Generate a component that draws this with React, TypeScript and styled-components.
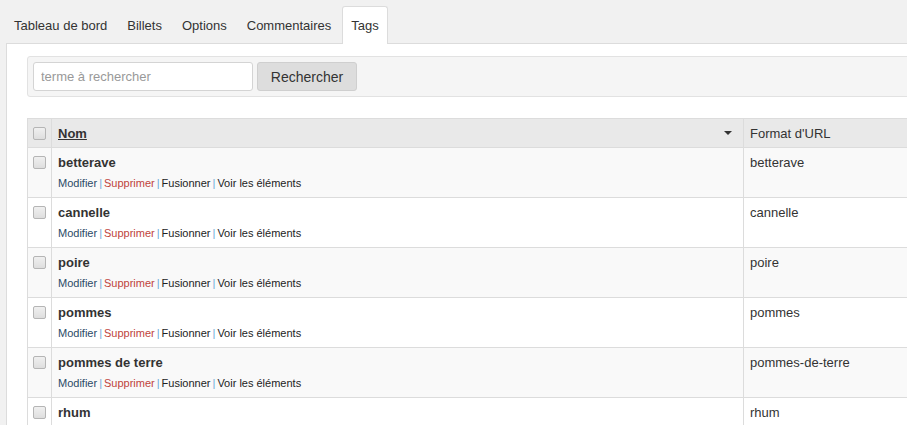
import React from "react";
import styled, { createGlobalStyle } from "styled-components";

const Global = createGlobalStyle`
  html, body { margin: 0; padding: 0; overflow: hidden; }
  body {
    background: #f1f1f1;
    font-family: "Liberation Sans", Arial, sans-serif;
    color: #333;
  }
`;

const Page = styled.div`
  width: 1100px;
`;

const TabBar = styled.nav`
  display: flex;
  align-items: flex-end;
  gap: 2px;
  padding: 6px 0 0 5px;
  height: 37px;
  position: relative;
  z-index: 1;
`;

const Tab = styled.div<{ $active?: boolean }>`
  height: 36px;
  display: flex;
  align-items: center;
  padding: 0 8px;
  font-size: 13px;
  color: #333;
  border: 1px solid ${(p) => (p.$active ? "#dcdcdc" : "transparent")};
  border-bottom: none;
  border-radius: 3px 3px 0 0;
  background: ${(p) => (p.$active ? "#fff" : "transparent")};
  margin-bottom: ${(p) => (p.$active ? "-1px" : "0")};
  padding-bottom: ${(p) => (p.$active ? "1px" : "0")};
  cursor: pointer;
`;

const Panel = styled.section`
  margin-left: 6px;
  background: #fff;
  border-top: 1px solid #dcdcdc;
  border-left: 1px solid #dcdcdc;
  padding: 12px 0 40px 20px;
  min-height: 400px;
`;

const SearchBox = styled.form`
  display: flex;
  gap: 4px;
  padding: 5px;
  background: #f5f5f5;
  border: 1px solid #e2e2e2;
  border-radius: 3px;
`;

const SearchInput = styled.input`
  box-sizing: border-box;
  width: 220px;
  height: 29px;
  border: 1px solid #d4d4d4;
  border-radius: 3px;
  background: #fff;
  padding: 0 7px;
  font-family: inherit;
  font-size: 13px;
  color: #333;
  &::placeholder { color: #999; }
`;

const Button = styled.button`
  box-sizing: border-box;
  width: 100px;
  height: 29px;
  border: 1px solid #cfcfcf;
  border-radius: 3px;
  background: #dddddd;
  font-family: inherit;
  font-size: 14px;
  color: #333;
`;

const Table = styled.table`
  margin-top: 21px;
  width: 1080px;
  border-collapse: collapse;
  border: 1px solid #dcdcdc;
  font-size: 13px;
`;

const HeadCell = styled.th<{ $w?: number }>`
  height: 28px;
  padding: 0 6px;
  background: #e9e9e9;
  border: 1px solid #dcdcdc;
  text-align: left;
  font-weight: normal;
  color: #333;
  ${(p) => (p.$w ? `width: ${p.$w}px;` : "")}
`;

const CheckHead = styled(HeadCell)`
  width: 23px;
  padding: 0;
  text-align: center;
`;

const HeadInner = styled.div`
  display: flex;
  align-items: center;
  justify-content: space-between;
  padding-right: 5px;
`;

const SortLink = styled.a`
  font-weight: bold;
  color: #333;
  text-decoration: underline;
`;

const SortArrow = styled.span`
  width: 0;
  height: 0;
  border-left: 4px solid transparent;
  border-right: 4px solid transparent;
  border-top: 4px solid #333;
`;

const Row = styled.tr<{ $odd: boolean }>`
  background: ${(p) => (p.$odd ? "#f9f9f9" : "#fff")};
`;

const Cell = styled.td`
  height: 50px;
  box-sizing: border-box;
  padding: 7px 6px 0 6px;
  vertical-align: top;
  border: 1px solid #dcdcdc;
  color: #333;
`;

const CheckCell = styled(Cell)`
  padding: 8px 0 0 0;
  text-align: center;
`;

const Check = styled.input.attrs({ type: "checkbox" })`
  appearance: none;
  box-sizing: border-box;
  width: 13px;
  height: 13px;
  margin: 0;
  display: block;
  margin-left: 5px;
  border: 1px solid #b5b5b5;
  border-radius: 2px;
  background: linear-gradient(#f0f0f0, #dedede);
`;

const HeadCheck = styled(Check)`
  margin-top: 1px;
`;

const Name = styled.div`
  font-weight: bold;
  line-height: 16px;
  color: #333;
`;

const Actions = styled.div`
  margin-top: 5px;
  font-size: 11px;
  line-height: 14px;
  color: #222;
`;

const Action = styled.a<{ $tone: "edit" | "delete" | "plain" }>`
  color: ${(p) =>
    p.$tone === "edit" ? "#2b4a66" : p.$tone === "delete" ? "#c0443c" : "#222"};
  text-decoration: none;
`;

const Sep = styled.span`
  color: #6aa8d8;
  margin: 0 2px;
`;

const Slug = styled.div`
  line-height: 16px;
  color: #333;
`;

const tabs = ["Tableau de bord", "Billets", "Options", "Commentaires", "Tags"];

const tags = [
  { name: "betterave", slug: "betterave" },
  { name: "cannelle", slug: "cannelle" },
  { name: "poire", slug: "poire" },
  { name: "pommes", slug: "pommes" },
  { name: "pommes de terre", slug: "pommes-de-terre" },
  { name: "rhum", slug: "rhum" },
];

export default function App() {
  return (
    <Page>
      <Global />
      <TabBar>
        {tabs.map((t) => (
          <Tab key={t} $active={t === "Tags"}>
            {t}
          </Tab>
        ))}
      </TabBar>
      <Panel>
        <SearchBox onSubmit={(e) => e.preventDefault()}>
          <SearchInput placeholder="terme à rechercher" />
          <Button type="submit">Rechercher</Button>
        </SearchBox>
        <Table>
          <thead>
            <tr>
              <CheckHead>
                <HeadCheck />
              </CheckHead>
              <HeadCell $w={679}>
                <HeadInner>
                  <SortLink>Nom</SortLink>
                  <SortArrow />
                </HeadInner>
              </HeadCell>
              <HeadCell>Format d'URL</HeadCell>
            </tr>
          </thead>
          <tbody>
            {tags.map((t, i) => (
              <Row key={t.slug} $odd={i % 2 === 0}>
                <CheckCell>
                  <Check />
                </CheckCell>
                <Cell>
                  <Name>{t.name}</Name>
                  <Actions>
                    <Action $tone="edit">Modifier</Action>
                    <Sep>|</Sep>
                    <Action $tone="delete">Supprimer</Action>
                    <Sep>|</Sep>
                    <Action $tone="plain">Fusionner</Action>
                    <Sep>|</Sep>
                    <Action $tone="plain">Voir les éléments</Action>
                  </Actions>
                </Cell>
                <Cell>
                  <Slug>{t.slug}</Slug>
                </Cell>
              </Row>
            ))}
          </tbody>
        </Table>
      </Panel>
    </Page>
  );
}
